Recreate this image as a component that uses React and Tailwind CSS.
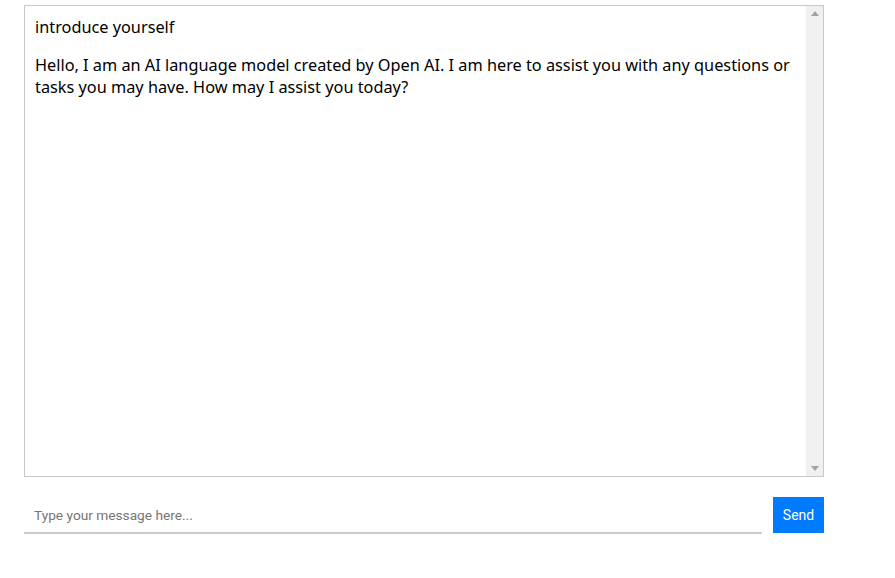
import React from 'react';

export default function App() {
  return (
    <div className="w-[895px] h-[578px] bg-white pt-[5px] pl-[24px]" style={{ fontFamily: '"Noto Sans", sans-serif' }}>
      <div className="w-[800px] h-[472px] border border-[#c8c8c8] flex">
        <div className="flex-1 px-[10px] pt-[10px] text-[16.3px] leading-[22px] text-black">
          <p className="mb-[16px]">introduce yourself</p>
          <p>Hello, I am an AI language model created by Open AI. I am here to assist you with any questions or tasks you may have. How may I assist you today?</p>
        </div>
        <div className="w-[17px] bg-[#f0f0f0] flex flex-col justify-between items-center py-[5px]">
          <svg width="8" height="5" viewBox="0 0 8 5"><path d="M0 5 L4 0 L8 5 Z" fill="#a3a3a3" /></svg>
          <svg width="8" height="5" viewBox="0 0 8 5"><path d="M0 0 L8 0 L4 5 Z" fill="#a3a3a3" /></svg>
        </div>
      </div>
      <div className="w-[800px] mt-[20px] flex items-stretch gap-[11px]" style={{ fontFamily: 'Roboto, Arial, sans-serif' }}>
        <input
          className="flex-1 h-[37px] px-[10px] text-[13.7px] border-b-2 border-[#cccccc] outline-none placeholder:text-[#757575]"
          placeholder="Type your message here..."
        />
        <button className="w-[51px] h-[36px] bg-[#007bff] text-white text-[14px] pt-[1px]">Send</button>
      </div>
    </div>
  );
}
